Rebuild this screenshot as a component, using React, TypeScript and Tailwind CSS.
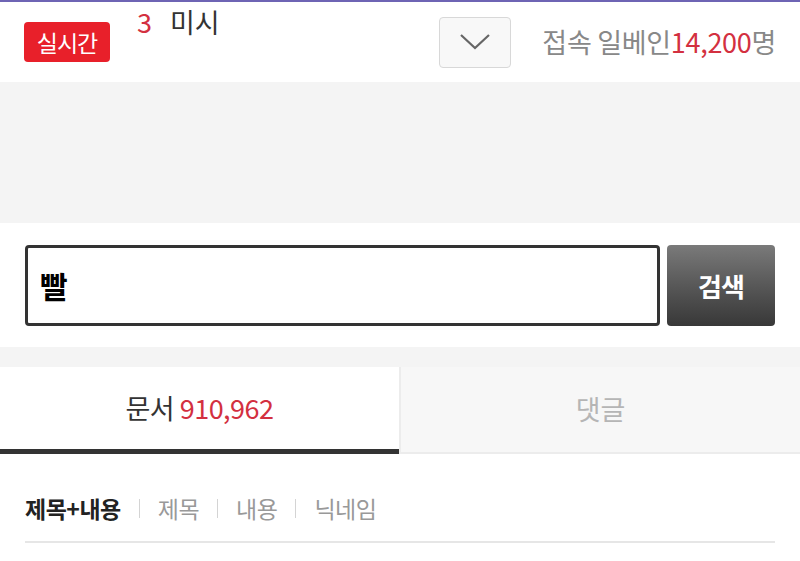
import React from 'react';

const FilterItem: React.FC<{ label: string; active?: boolean; first?: boolean }> = ({ label, active, first }) => (
  <>
    {!first && <span className="mx-[18px] h-[19px] w-px bg-[#d4d4d4]" />}
    <span className={active ? 'font-bold text-[#222]' : 'text-[#999]'}>{label}</span>
  </>
);

export default function App() {
  return (
    <div
      className="w-full bg-white border-t-2 border-[#6e64b4]"
      style={{ fontFamily: '"Noto Sans CJK KR", "Noto Sans", sans-serif' }}
    >
      {/* header */}
      <div className="flex items-center h-[80px] pl-[24px] pr-[24px]">
        <span className="flex items-center justify-center w-[86px] h-[40px] rounded-[4px] bg-[#e8202a] text-white text-[23px] tracking-[-1px]">
          실시간
        </span>
        <div className="self-start ml-[27px] mt-[2px] flex items-center text-[27px] leading-[36px]">
          <span className="text-[#d33040]">3</span>
          <span className="ml-[18px] text-[#333]">미시</span>
        </div>
        <button className="ml-auto flex items-center justify-center w-[72px] h-[51px] rounded-[4px] border border-[#d8d8d8] bg-[#f8f8f8]">
          <svg width="32" height="18" viewBox="0 0 32 18" fill="none" stroke="#666" strokeWidth="2.2">
            <path d="M2 2 L16 15 L30 2" />
          </svg>
        </button>
        <div className="ml-[31px] text-[27px] tracking-[-0.3px] text-[#888]">
          접속 일베인<span className="text-[#d33040]">14,200</span>명
        </div>
      </div>

      {/* empty banner area */}
      <div className="h-[141px] bg-[#f4f4f4]" />

      {/* search */}
      <div className="flex gap-[7px] px-[25px] pt-[22px] pb-[21px]">
        <div className="flex-1 flex items-center h-[81px] rounded-[4px] border-[3px] border-[#333] px-[12px] text-[30px] font-bold text-black">
          빨
        </div>
        <button className="w-[108px] h-[81px] rounded-[4px] bg-gradient-to-b from-[#7a7a7a] to-[#383838] text-white text-[26px] font-bold tracking-[-1px]">
          검색
        </button>
      </div>

      <div className="h-[20px] bg-[#f4f4f4]" />

      {/* tabs */}
      <div className="flex h-[87px]">
        <div className="flex-1 flex items-center justify-center bg-white border-b-[5px] border-[#333] text-[27px] tracking-[-0.5px] text-[#333]">
          문서&nbsp;<span className="text-[#d33040]">910,962</span>
        </div>
        <div className="flex-1 flex items-center justify-center bg-[#f7f7f7] border-l-2 border-b-2 border-[#ececec] text-[27px] text-[#b5b5b5]">
          댓글
        </div>
      </div>

      {/* filters */}
      <div className="mx-[25px] h-[89px] pt-[38px] border-b-2 border-[#e6e6e6]">
        <div className="flex items-center text-[23px] tracking-[-0.5px] leading-[32px]">
          <FilterItem label="제목+내용" active first />
          <FilterItem label="제목" />
          <FilterItem label="내용" />
          <FilterItem label="닉네임" />
        </div>
      </div>
      <div className="h-[16px]" />
    </div>
  );
}
